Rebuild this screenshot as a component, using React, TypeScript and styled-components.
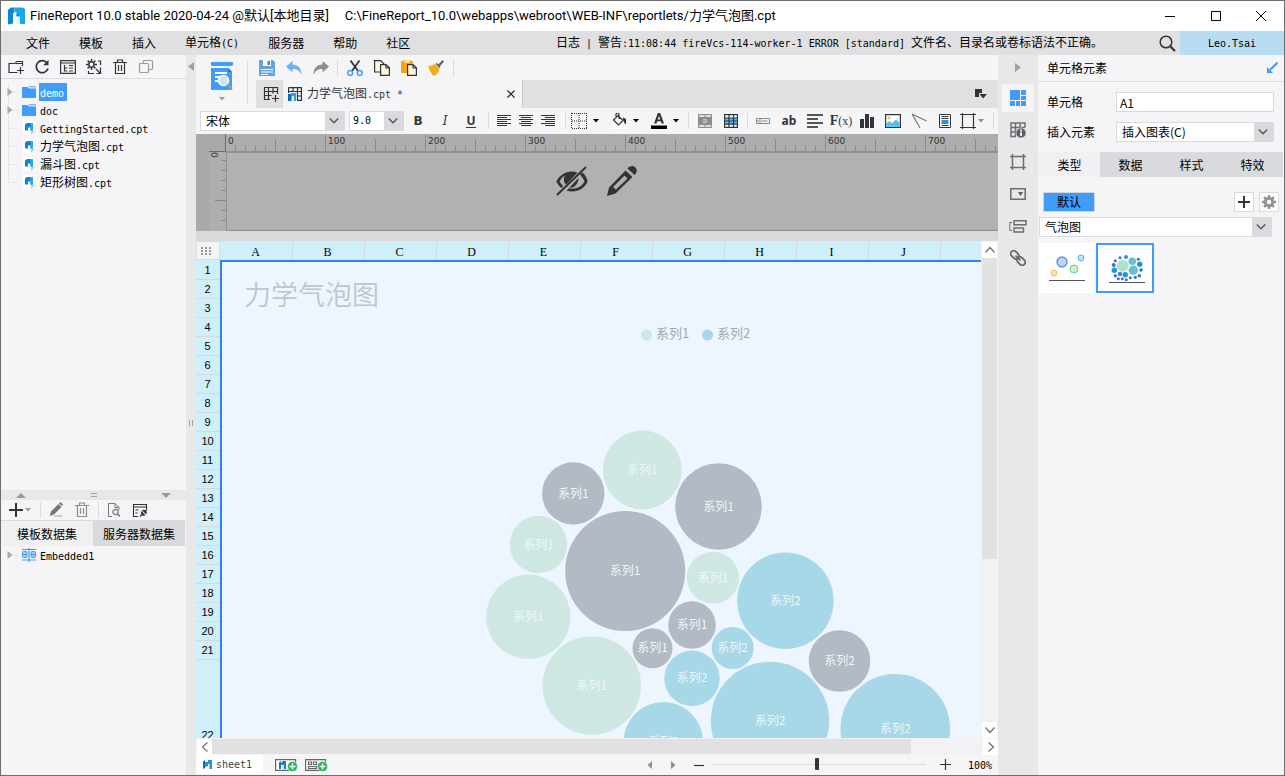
import React, { useEffect, useState } from "react";
import styled, { createGlobalStyle, css } from "styled-components";

const blue = "#419bf9";
const ink = "#333437";
const panel = "#f5f5f7";
const gutter = "#e8e8e8";
const line = "#d9dadd";

const GlobalStyle = createGlobalStyle`
  *, *::before, *::after { box-sizing: border-box; }
  body { margin: 0; }
  body, button, input, select {
    font-family: "Noto Sans CJK SC", "Noto Sans", sans-serif;
    font-size: 12px;
    line-height: 18px;
    color: #000;
  }
  button, input, select { margin: 0; padding: 0; border: 0; background: none; outline: 0; border-radius: 0; }
  ul { list-style: none; margin: 0; padding: 0; }
  svg { display: block; flex: none; }
`;

/* ---------- shared pieces ---------- */

const Latin = styled.span`
  font-family: "DejaVu Sans Mono", "Liberation Mono", monospace;
  font-size: 10px;
  white-space: pre;
`;

const Mixed = ({ children }: { children: string }) => (
  <span>
    {children.split(/([\x20-\x7e]+)/).map((part, i) =>
      i % 2 ? <Latin key={i}>{part}</Latin> : part
    )}
  </span>
);

type IconProps = { w?: number; h?: number; color?: string; children: React.ReactNode };
const Icon = ({ w = 16, h = 16, color = ink, children }: IconProps) => (
  <svg width={w} height={h} viewBox={`0 0 ${w} ${h}`} fill="none" stroke={color} aria-hidden="true">
    {children}
  </svg>
);

const Caret = ({ color = "#000" }: { color?: string }) => (
  <svg width="6" height="4" viewBox="0 0 6 4" aria-hidden="true"><path d="M0 0h6L3 3.5z" fill={color} /></svg>
);

const IconButton = styled.button<{ $w?: number; $h?: number }>`
  display: flex;
  flex: none;
  align-items: center;
  justify-content: center;
  gap: 2px;
  width: ${(p) => p.$w ?? 26}px;
  height: ${(p) => p.$h ?? 22}px;
`;

const DropButton = styled.button<{ $w?: number }>`
  display: flex;
  flex: none;
  align-items: center;
  gap: 6px;
  width: ${(p) => p.$w ?? 40}px;
  height: 22px;
`;

const Sep = styled.span<{ $w?: number; $h?: number }>`
  flex: none;
  width: ${(p) => p.$w ?? 7}px;
  height: ${(p) => p.$h ?? 16}px;
  background: linear-gradient(${line}, ${line}) center / 1px 100% no-repeat;
`;

const Spacer = styled.span`
  flex: 1;
`;

const SelectBox = styled.span<{ $w?: number }>`
  display: grid;
  grid-template-columns: 1fr 20px;
  align-items: center;
  height: 20px;
  flex: ${(p) => (p.$w ? "none" : "1")};
  width: ${(p) => (p.$w ? `${p.$w}px` : "auto")};
  border: 1px solid ${line};
  background: linear-gradient(90deg, #fff calc(100% - 19px), ${line} calc(100% - 19px));
  svg { grid-area: 1 / 2; justify-self: center; pointer-events: none; }
`;

const PickerInput = styled.select<{ $mono?: boolean }>`
  grid-area: 1 / 1 / 2 / 3;
  appearance: none;
  height: 18px;
  padding-left: ${(p) => (p.$mono ? 3 : 5)}px;
  ${(p) => p.$mono && css`font-family: "DejaVu Sans Mono", monospace; font-size: 10px;`}
`;

const Picker = ({ label, value, w, id, mono }: { label: string; value: string; w?: number; id?: string; mono?: boolean }) => (
  <SelectBox $w={w}>
    <PickerInput id={id} aria-label={label} defaultValue={value} $mono={mono}>
      <option>{value}</option>
    </PickerInput>
    <Icon w={10} h={6} color="#555"><path d="M.8.6 5 4.8 9.2.6" strokeWidth="1.4" /></Icon>
  </SelectBox>
);

const Tabs = styled.div`
  display: flex;
  flex: none;
  height: 25px;
`;

const SideTabs = styled(Tabs)`
  padding-right: 1px;
`;

const Tab = styled.button<{ $on?: boolean }>`
  flex: 1 0 0;
  min-width: 0;
  background: ${(p) => (p.$on ? "#f0f0f2" : line)};
`;

/* ---------- logo ---------- */

const Mark = () => (
  <svg width="17" height="18" viewBox="0 0 17 18" aria-hidden="true">
    <path d="M0 3 3 .5h3.500v5L5 7v9.500L0 17.500z" fill="#0b84dc" />
    <path d="M6.500.5H14Q17 .5 17 3v14h-4.500l-1-.5V10H8.500V5L6.500 3z" fill="#18a9ea" />
    <path d="M5.500 6.500 7 5h1.500v4.500H12V17H8.500v-6H6.500v5.500h-1z" fill="#e4f4fd" />
    <path d="M7 1h7.500Q16.500 1 16.500 3v4H8.500V5H7z" fill="#18a9ea" />
    <path d="M8.500 7.500h2V9h-2z" fill="#0766b8" />
  </svg>
);

/* ---------- window frame ---------- */

const Window = styled.div`
  display: flex;
  flex-direction: column;
  height: 100vh;
  border: 1px solid #6d6d70;
  background: ${panel};
  overflow: hidden;
`;

const TitleBar = styled.header`
  display: flex;
  flex: none;
  align-items: center;
  height: 30px;
  padding-left: 7px;
  background: #fff;
  font-family: Roboto, "Noto Sans CJK SC", sans-serif;
  font-size: 13px;
`;

const TitleText = styled.span`
  margin-left: 5px;
  white-space: nowrap;
`;

const PathText = styled.span`
  margin-left: 16px;
  white-space: nowrap;
`;

const MenuBar = styled.div`
  display: flex;
  flex: none;
  align-items: center;
  height: 24px;
  background: #e0e0e2;
`;

const Menu = styled.nav`
  display: flex;
  gap: 29px;
  padding-left: 25px;
`;

const MenuItem = styled.button`
  white-space: nowrap;
`;

const LogLine = styled.span`
  margin-right: 52px;
  white-space: nowrap;
`;

const User = styled.button`
  flex: none;
  width: 104px;
  height: 24px;
  background: #b8dcf2;
`;

const Body = styled.div`
  display: flex;
  flex: 1;
  min-height: 0;
`;

/* ---------- left side ---------- */

const Side = styled.aside`
  display: flex;
  flex: none;
  flex-direction: column;
  width: 185px;
`;

const SideTools = styled.div<{ $h: number }>`
  display: flex;
  flex: none;
  align-items: center;
  height: ${(p) => p.$h}px;
  padding-left: 2px;
  border-bottom: 1px solid ${line};
`;

const Tree = styled.ul`
  flex: 1;
  min-height: 0;
  overflow: hidden;
`;

const FileTree = styled(Tree)`
  padding-top: 4px;
`;

const DatasetTree = styled(Tree)`
  flex: none;
  height: 229px;
`;

const Node = styled.li`
  display: flex;
  align-items: center;
  height: 18px;
  padding-left: 5px;
`;

const NodeIcon = styled.span`
  display: flex;
  justify-content: center;
  width: 18px;
`;

const NodeLabel = styled.span<{ $on?: boolean }>`
  height: 18px;
  padding: 0 3px 0 1px;
  margin-left: 1px;
  white-space: nowrap;
  background: ${(p) => (p.$on ? blue : "none")};
  color: ${(p) => (p.$on ? "#fff" : "#000")};
`;

const SplitBar = styled.div`
  display: flex;
  flex: none;
  align-items: center;
  justify-content: space-between;
  height: 10px;
  padding: 0 15px;
  background: ${gutter};
`;

const SideGrip = styled.div`
  display: flex;
  flex: none;
  flex-direction: column;
  align-items: center;
  width: 10px;
  padding-top: 7px;
  background: ${gutter};
`;

const GripMark = styled.span`
  margin: auto 0;
`;

const Guide = ({ open, last }: { open?: boolean; last?: boolean }) => (
  <Icon w={14} h={18} color="#e6e6e9">
    <path d={last ? "M2.500 0v9.500H12" : "M2.500 0v18M2.500 9.500H12"} />
    {open && <path d="M1.500 5v8l5-4z" fill="#a8a8aa" stroke="none" />}
  </Icon>
);

const Folder = () => (
  <Icon w={14} h={12} color="none">
    <path d="M0 1h5.500L7 2.500h7V12H0z" fill={blue} />
    <path d="M6 0h8v1.500H7.500z" fill="#7fbcfb" />
  </Icon>
);

const FileIcon = () => (
  <Icon w={12} h={14} color="none">
    <path d="M0 0h12v9l-4 5H0z" fill="#fff" />
    <path d="M8 10h4l-4 4z" fill="#c9c9cc" />
    <path d="M2 3.500 4 2h6v7.500H7.500v-3H5V9.500H2z" fill="#1183d8" />
    <path d="M7 2h3v7.500H7.500V4z" fill="#25a9ea" />
  </Icon>
);

const files = ["GettingStarted.cpt", "力学气泡图.cpt", "漏斗图.cpt", "矩形树图.cpt"];

const Trash = ({ color }: { color?: string }) => (
  <Icon color={color}>
    <path d="M1 3.500h14M5.500 3V1h5v2M3.500 4v10.500h9V4M6.500 6v6M9.500 6v6" strokeWidth="1.2" />
  </Icon>
);

const LeftSide = () => (
  <Side>
    <SideTools $h={24}>
      <IconButton aria-label="新建文件夹"><Icon><path d="M9.500 13.500H1v-9h6l1.500-2h6V7M8 4.500h6.500M12.500 8v7M9 11.500h7" strokeWidth="1.2" /></Icon></IconButton>
      <IconButton aria-label="刷新"><Icon><path d="M13 4A6 6 0 1 0 14 9.500" strokeWidth="1.7" /><path d="M14.500.8v5.400H9.200z" fill={ink} stroke="none" /></Icon></IconButton>
      <IconButton aria-label="定位"><Icon><path d="M.6 1.600h14.800v12.800H.6zM1 4h14M4.500 6v6h3M4.500 9h3M9 6.500h4M9 9h4M9 12h4" strokeWidth="1.2" /></Icon></IconButton>
      <IconButton aria-label="设置目录"><Icon><circle cx="5.500" cy="5.500" r="2.700" strokeWidth="1.5" /><path d="M5.500 0v2M5.500 9v2M0 5.500h2M9 5.500h2M1.600 1.600l1.500 1.500M8 8l1.400 1.400M9.400 1.600 8 3.100M1.600 9.400 3.100 8" strokeWidth="1.5" /><path d="M12 2h2.500v4M2.500 12v2.500H8M14.500 8.500v6h-4M10 10l4 4" strokeWidth="1.2" /></Icon></IconButton>
      <IconButton aria-label="删除"><Trash /></IconButton>
      <IconButton aria-label="复制"><Icon color="#9a9a9d"><path d="M5.500 4V2.500a1 1 0 0 1 1-1h7a1 1 0 0 1 1 1v7a1 1 0 0 1-1 1H11M2.500 4.500h7a1 1 0 0 1 1 1v7a1 1 0 0 1-1 1h-7a1 1 0 0 1-1-1v-7a1 1 0 0 1 1-1z" strokeWidth="1.2" /></Icon></IconButton>
    </SideTools>
    <FileTree>
      <Node><Guide open /><NodeIcon><Folder /></NodeIcon><NodeLabel $on><Mixed>demo</Mixed></NodeLabel></Node>
      <Node><Guide open /><NodeIcon><Folder /></NodeIcon><NodeLabel><Mixed>doc</Mixed></NodeLabel></Node>
      {files.map((name, i) => (
        <Node key={name}>
          <Guide last={i === files.length - 1} />
          <NodeIcon><FileIcon /></NodeIcon>
          <NodeLabel><Mixed>{name}</Mixed></NodeLabel>
        </Node>
      ))}
    </FileTree>
    <SplitBar>
      <Icon w={10} h={5} color="none"><path d="M0 5 5 0l5 5z" fill="#9b9b9e" /></Icon>
      <Icon w={6} h={4} color="#a4a4a6"><path d="M0 .5h6M0 3.500h6" /></Icon>
      <Icon w={10} h={5} color="none"><path d="M0 0h10L5 5z" fill="#9b9b9e" /></Icon>
    </SplitBar>
    <SideTools $h={21}>
      <IconButton $w={34} $h={20} aria-label="新增数据集"><Icon w={14} h={14}><path d="M7 0v14M0 7h14" strokeWidth="2" /></Icon><Caret color="#9b9b9e" /></IconButton>
      <Sep $w={6} />
      <IconButton $h={20} aria-label="编辑"><Icon color="none"><path d="m1.500 14 1.500-4.500L10.500 2l3 3L6 12.500z" fill="#77777a" /><path d="M11 1.500 12.500 0 15 2.500 14 4z" fill="#77777a" /><path d="M6 14h8" stroke="#b0b0b3" strokeWidth="1.2" /></Icon></IconButton>
      <IconButton $h={20} aria-label="删除数据集"><Trash color="#8d8d90" /></IconButton>
      <Sep $w={6} />
      <IconButton $h={20} aria-label="预览"><Icon color="#77777a"><path d="M6 14.500H2.500V1.500H9l4 4V8M9 1.500v4h4" /><circle cx="9.500" cy="10" r="2.700" strokeWidth="1.2" /><path d="m11.500 12 2.500 2.500" strokeWidth="1.5" /></Icon></IconButton>
      <IconButton $h={20} aria-label="连接"><Icon><path d="M6 14.500H1.500v-12h13V7M1.500 5h13M3.500 8h3M3.500 11h2" strokeWidth="1.1" /><path d="M8 14.500l2-2M13 9.500l2-2M9.500 10l3 3c-1.500 1-3.500-1-3-3zM11 8.500l3 3c1-1.500-1-3.500-3-3z" strokeWidth="1.1" /></Icon></IconButton>
    </SideTools>
    <SideTabs role="tablist">
      <Tab role="tab" aria-selected $on>模板数据集</Tab>
      <Tab role="tab">服务器数据集</Tab>
    </SideTabs>
    <DatasetTree>
      <Node>
        <Icon w={14} h={18} color="#e6e6e9"><path d="M6 9.500h6" /><path d="M1.500 5v8l5-4z" fill="#a8a8aa" stroke="none" /></Icon>
        <NodeIcon>
          <Icon w={14} h={14} color={blue}>
            <path d="M7 0v14M0 1.500h14M0 12h14" strokeWidth="1.2" />
            <rect x=".5" y="3.500" width="4.500" height="6" rx="1" fill="#9accfb" />
            <rect x="9" y="3.500" width="4.500" height="6" rx="1" fill="#9accfb" />
            <path d="M1 6.500h4M9 6.500h4" />
          </Icon>
        </NodeIcon>
        <NodeLabel><Mixed>Embedded1</Mixed></NodeLabel>
      </Node>
    </DatasetTree>
  </Side>
);

/* ---------- centre: toolbars ---------- */

const Main = styled.main`
  display: flex;
  flex: 1;
  flex-direction: column;
  min-width: 0;
`;

const Top = styled.div`
  display: flex;
  flex: none;
  height: 53px;
`;

const PreviewCell = styled.div`
  display: flex;
  flex: none;
  align-items: center;
  width: 60px;
`;

const PreviewButton = styled.button`
  display: flex;
  flex-direction: column;
  align-items: center;
  gap: 7px;
  width: 51px;
`;

const TopStack = styled.div`
  display: flex;
  flex: 1;
  flex-direction: column;
  min-width: 0;
`;

const QuickBar = styled.div`
  display: flex;
  align-items: center;
  height: 25px;
  margin-left: -3px;
`;

const FileTabs = styled.div`
  display: flex;
  align-items: center;
  height: 28px;
  background: #e0e0e2;
  padding-right: 9px;
`;

const NewTab = styled(IconButton)`
  border-right: 1px solid ${line};
  padding-left: 4px;
`;

const FileTab = styled.div`
  display: flex;
  align-items: center;
  justify-content: space-between;
  width: 240px;
  height: 28px;
  padding: 0 4px 0 5px;
  border-right: 1px solid #c9c9cc;
  background: ${panel};
`;

const FileName = styled.span`
  display: flex;
  align-items: center;
  gap: 5px;
  color: ${ink};
`;

const FormatBar = styled.div`
  display: flex;
  flex: none;
  align-items: center;
  height: 26px;
  padding-left: 4px;
`;

const SizeCell = styled.span`
  display: flex;
  margin-left: 4px;
`;

const Letter = styled.span<{ $kind: "b" | "i" | "u" | "ab" | "fx" }>`
  font-family: "DejaVu Sans", sans-serif;
  font-size: 12px;
  font-weight: bold;
  line-height: 14px;
  color: ${ink};
  ${(p) => p.$kind === "i" && css`font-family: "DejaVu Serif", serif; font-style: italic; font-weight: normal;`}
  ${(p) => p.$kind === "u" && css`border-bottom: 1px solid ${ink}; font-family: "Noto Sans", sans-serif; line-height: 12px;`}
  ${(p) => p.$kind === "ab" && css`font-family: "Noto Sans", sans-serif;`}
  ${(p) => p.$kind === "fx" && css`font-family: "Liberation Serif", serif; font-size: 14px;`}
`;

const Argument = styled.span`
  font-size: 12px;
  font-weight: normal;
`;

const GridIcon = () => (
  <Icon><path d="M7 13.500H1.500v-12h13V8M1.500 5.500h13M1.500 9.500h7M5.500 1.500v12M10 1.500v6M12.500 9v7M9 12.500h7" strokeWidth="1.2" /></Icon>
);

const Lines = ({ d }: { d: string }) => <Icon w={14} h={12}><path d={d} /></Icon>;

const QuickTools = () => (
  <QuickBar>
    <IconButton $w={27} aria-label="保存"><Icon color="none"><path d="M0 0h14l2 2v14H0z" fill="#69a2dd" /><path d="M4 0h8v6H4z" fill="#fff" /><path d="M8.500 1H11v4H8.500z" fill="#3f86cf" /><path d="M2 9.500h12M2 12h12M2 14.500h7" stroke="#fff" /></Icon></IconButton>
    <IconButton $w={27} aria-label="撤销"><Icon color="none"><path d="M0 6.500 6.500 1v3.500C12 4.500 15.500 8 15.500 15 13.500 10.500 11 9 6.500 9v3.500z" fill="#6fb0f2" /></Icon></IconButton>
    <IconButton $w={27} aria-label="重做"><Icon color="none"><path d="M16 6.500 9.500 1v3.500C4 4.500.5 8 .5 15 2.500 10.500 5 9 9.500 9v3.500z" fill="#8e8e92" /></Icon></IconButton>
    <Sep />
    <IconButton $w={27} aria-label="剪切"><Icon><path d="M3.500.5 11 11M12.500.5 5 11" strokeWidth="1.8" /><circle cx="3.200" cy="13" r="2.400" stroke={blue} strokeWidth="1.5" /><circle cx="12.800" cy="13" r="2.400" stroke={blue} strokeWidth="1.5" /></Icon></IconButton>
    <IconButton $w={27} aria-label="复制单元格"><Icon><path d="M.6.6h6L10 4v8H.6z" fill="#fff6dc" strokeWidth="1.2" /><path d="M6.600 4.600h5.400l3.400 3.200v7.600H6.600zM12 4.600v3.400h3.400" fill="#fff6dc" strokeWidth="1.2" /></Icon></IconButton>
    <IconButton $w={27} aria-label="粘贴"><Icon><path d="M0 1h12v12H0z" fill="#f2a814" stroke="none" /><path d="M3 0h6v3H3z" fill="#fff" stroke="#f2a814" /><path d="M6.600 4.600h5.400l3.400 3.200v7.600H6.600zM12 4.600v3.400h3.400" fill="#fff6dc" strokeWidth="1.2" /></Icon></IconButton>
    <IconButton $w={27} aria-label="格式刷"><Icon color="none"><path d="M0 5.500c3 .8 4.500-.2 6.500-1.500l5 5c-.5 3-3 6-6 7C3 13.500 1 9.500 0 5.500z" fill="#f4ab1b" /><path d="m7.500 4 4 4 1-1.200L9 3zM10.500 4.500 14.500 0 16 1.500 12 6z" fill="#5c5c60" /></Icon></IconButton>
    <Sep $w={9} />
  </QuickBar>
);

const TopArea = () => (
  <Top>
    <PreviewCell>
      <PreviewButton aria-label="预览模板">
        <Icon w={22} h={28} color="none">
          <path d="M0 0h22v3l-1 1H1L0 3zM0 6h17l4 4v18H0z" fill={blue} />
          <path d="M17 6v4h4z" fill="#1b6fd0" />
          <path d="M4 11h12M4 15h5M4 19h4" stroke="#fff" strokeWidth="2" />
          <circle cx="12.500" cy="18.500" r="5" fill="#cfe1f4" stroke="#fff" strokeWidth="1.5" />
          <path d="m16.200 22.200 4.800 4.800" stroke="#8ba0b8" strokeWidth="2.5" />
        </Icon>
        <Caret color="#9b9b9e" />
      </PreviewButton>
      <Sep $w={1} $h={42} />
    </PreviewCell>
    <TopStack>
      <QuickTools />
      <FileTabs>
        <NewTab $w={27} $h={28} aria-label="新建报表"><GridIcon /></NewTab>
        <FileTab>
          <FileName>
            <Icon w={14} h={14}>
              <path d="M.6.600h12.800v12.800H9M.6 4.500h13M5 .6v4M9.500.6v13M.6.6V6M9.500 9h4" strokeWidth="1.2" />
              <path d="M0 7h3.500v7H0z" fill="#0a6cc0" stroke="none" /><path d="M3 6h5v8H6V9H3z" fill="#22a5e8" stroke="none" />
            </Icon>
            <Mixed>力学气泡图.cpt *</Mixed>
          </FileName>
          <IconButton $w={14} aria-label="关闭标签"><Icon w={8} h={8}><path d="m.5.5 7 7m0-7-7 7" strokeWidth="1.3" /></Icon></IconButton>
        </FileTab>
        <Spacer />
        <IconButton $w={16} aria-label="标签列表"><Icon w={12} h={10} color="none"><path d="M0 0h7v4H4v4H0z" fill={ink} /><path d="M4.500 5H12L8.200 9.500z" fill={ink} /></Icon></IconButton>
      </FileTabs>
    </TopStack>
  </Top>
);

const Format = () => (
  <FormatBar>
    <Picker label="字体" value="宋体" w={145} />
    <SizeCell><Picker label="字号" value="9.0" w={55} mono /></SizeCell>
    <IconButton $w={28} aria-label="加粗"><Letter $kind="b">B</Letter></IconButton>
    <IconButton aria-label="斜体"><Letter $kind="i">I</Letter></IconButton>
    <IconButton aria-label="下划线"><Letter $kind="u">U</Letter></IconButton>
    <Sep $w={9} />
    <IconButton $w={22} aria-label="左对齐"><Lines d="M0 .5h14M0 2.500h10M0 4.500h14M0 6.500h10M0 8.500h14M0 10.500h10" /></IconButton>
    <IconButton $w={22} aria-label="居中"><Lines d="M0 .5h14M2 2.500h10M0 4.500h14M2 6.500h10M0 8.500h14M2 10.500h10" /></IconButton>
    <IconButton $w={22} aria-label="右对齐"><Lines d="M0 .5h14M4 2.500h10M0 4.500h14M4 6.500h10M0 8.500h14M4 10.500h10" /></IconButton>
    <Sep $w={12} />
    <DropButton aria-label="边框"><Icon><path d="M1 .5h15M1 15.500h15M1 8h15M.5 0v16M15.500 0v16M8 0v16" strokeDasharray="1 1" /></Icon><Caret /></DropButton>
    <DropButton aria-label="背景色"><Icon><path d="M0 12h16v4H0z" fill="#fff" stroke="none" /><path d="M2.500 7 7 2.500l5 5L7.500 12zM5 5V1.500a1.500 1.500 0 0 1 3 0V6" strokeWidth="1.2" /><path d="M12 4.500 15 6v5c-2 0-1.500-2.500-3-4z" fill={ink} stroke="none" /></Icon><Caret /></DropButton>
    <DropButton $w={34} aria-label="字体颜色"><Icon color="none"><path d="M0 12.500h16V16H0z" fill="#000" /><path d="M3 10.500 6.800 0h2.400L13 10.500h-2.500L9.800 8.300H6.200l-.7 2.200zM6.800 6.500h2.400L8 2.800z" fill={ink} /></Icon><Caret /></DropButton>
    <Sep />
    <IconButton aria-label="合并单元格"><Icon w={14} h={14} color="#8c8c8f"><path d="M.5.5h13v13H.5zM7 0v3M7 11v3" fill="#dcdcdf" /><path d="M0 3h14v8H0z" fill="#8c8c8f" stroke="none" /><path d="M5 5.500h3.500v3H5.500V7h3" stroke="#c4c4c6" /></Icon></IconButton>
    <IconButton aria-label="取消合并"><Icon w={14} h={14}><path d="M.6.600h12.800v12.800H.6z" fill="#fff" strokeWidth="1.2" /><path d="M1 4h12v6.200H1z" fill="#4fc3f7" stroke="none" /><path d="M0 4h14M0 7h14M0 10.200h14M5 0v14M9.500 0v14" strokeWidth="1.2" /></Icon></IconButton>
    <Sep $w={6} />
    <IconButton aria-label="插入控件"><Icon w={14} h={6} color="#88888b"><path d="M.5.5h13v5H.5zM4 .5v5M5.500 3h6M2 2v2" /></Icon></IconButton>
    <IconButton aria-label="插入文本"><Letter $kind="ab">ab</Letter></IconButton>
    <IconButton aria-label="富文本"><Icon h={14} color="#555558"><path d="M0 1h16M0 5h11M0 9h16M0 13h11" strokeWidth="2" /></Icon></IconButton>
    <IconButton aria-label="公式"><Letter $kind="fx">F<Argument>(x)</Argument></Letter></IconButton>
    <IconButton aria-label="图表"><Icon w={14} h={14} color="none"><path d="M0 5h4v9H0zM5 0h4v14H5zM10 3h4v11h-4z" fill={ink} /></Icon></IconButton>
    <IconButton aria-label="图片"><Icon h={14}><path d="M.6.600h14.800v12.800H.6z" fill="#fff" strokeWidth="1.2" /><path d="M1.200 12.800V9.500L4 7l3 2 4-3.500 3.800 3.300v4z" fill="#4fc3f7" stroke="none" /><circle cx="4" cy="4" r="1.600" fill="#f9c23c" stroke="none" /></Icon></IconButton>
    <IconButton aria-label="斜线"><Icon color="#77777a"><path d="M1 1l14.500 7M1 1l8 14" strokeWidth="1.2" /></Icon></IconButton>
    <IconButton aria-label="子报表"><Icon w={12} h={14}><path d="M.5.5h11v13H.5z" fill="#fff" /><path d="M2.500 2.500h7M2.500 4.500h7M2.500 11.500h7" /><path d="M2.500 6h7v4h-7z" fill="#2f8fdc" stroke="none" /></Icon></IconButton>
    <IconButton $w={28} aria-label="悬浮元素"><Icon><path d="M2.500 0v16M13.500 0v16M0 1.500h16M0 14.500h16" strokeWidth="1.2" /></Icon><Caret color="#8e8e92" /></IconButton>
    <Spacer />
    <Sep $w={9} />
  </FormatBar>
);

/* ---------- centre: parameter pane with rulers ---------- */

const ParamPane = styled.section`
  display: grid;
  flex: none;
  grid-template: 17px 80px / 30px 1fr;
  overflow: hidden;
  background: #b1b1b1;
`;

const RulerCorner = styled.div`
  background: #a9a9a9;
  border-right: 1px solid #6b6b6b;
`;

const RulerTop = styled.div`
  min-width: 0;
  overflow: hidden;
  background: #adadad;
`;

const RulerLeft = styled.div`
  background: linear-gradient(90deg, #a9a9a9 13px, #aeaeae 13px);
`;

const ParamCanvas = styled.div`
  display: flex;
  justify-content: center;
  gap: 18px;
  padding: 13px 31px 0 0;
  border: solid #909090;
  border-width: 2px 0 1px 1px;
`;

/* Width left for the ruler once the side panels are taken off the window. */
const rulerWidth = () => Math.max(0, window.innerWidth - 513);

const useRulerWidth = () => {
  const [width, setWidth] = useState(rulerWidth);
  useEffect(() => {
    const update = () => setWidth(rulerWidth());
    window.addEventListener("resize", update);
    return () => window.removeEventListener("resize", update);
  }, []);
  return width;
};

const Rulers = () => {
  const width = useRulerWidth();
  const ticks = Array.from({ length: Math.floor(width / 10) }, (_, i) => i + 1);
  const labels = Array.from({ length: Math.floor((width - 20) / 100) + 1 }, (_, i) => i * 100);
  return (
    <>
      <RulerCorner />
      <RulerTop>
        <svg width={width} height="17" fontFamily="DejaVu Sans, sans-serif" fontSize="9" fill="#333">
          <path d={ticks.map((n) => `M${n * 10 - 0.5} ${n % 10 === 0 ? 1 : n % 5 === 0 ? 5 : 12}V17`).join("")} stroke="#8a8a8a" />
          {labels.map((n) => <text key={n} x={n + 2} y="10">{n}</text>)}
        </svg>
      </RulerTop>
      <RulerLeft>
        <svg width="30" height="80" viewBox="0 0 30 80" fontFamily="DejaVu Sans, sans-serif" fontSize="9" fill="#333">
          <path d="M25 9.500h5M25 19.500h5M25 29.500h5M25 39.500h5M19 49.500h11M25 59.500h5M25 69.500h5" stroke="#8a8a8a" />
          <path d="M13 .5h17" stroke="#6b6b6b" />
          <text transform="translate(15 1) rotate(90)" x="0" y="0">0</text>
        </svg>
      </RulerLeft>
    </>
  );
};

const Strip = styled.div`
  flex: none;
  height: 10px;
  background: #d9d9dc;
`;

/* ---------- centre: sheet ---------- */

const SheetArea = styled.div`
  display: flex;
  flex: 1;
  min-height: 0;
`;

const Sheet = styled.div`
  display: grid;
  flex: 1;
  grid-template: 19px 1fr / 24px 1fr;
  min-width: 0;
  min-height: 0;
  overflow: hidden;
`;

const Corner = styled.button`
  display: flex;
  align-items: center;
  padding-left: 4px;
  border: 1px solid ${line};
  background: ${panel};
`;

const Columns = styled.div`
  display: flex;
  overflow: hidden;
  background: #cff0fb;
`;

const Column = styled.div`
  flex: none;
  width: 72px;
  padding: 2px 2px 0 0;
  border-left: 1px solid #d5dade;
  text-align: center;
  font-family: "Liberation Serif", serif;
  &:first-child { border-left-color: transparent; }
`;

const Rows = styled.div`
  padding-top: 1px;
  overflow: hidden;
  background: #cff0fb;
`;

const Row = styled.div<{ $tall?: boolean }>`
  display: flex;
  align-items: center;
  justify-content: center;
  height: ${(p) => (p.$tall ? 151 : 19)}px;
  padding-right: 1px;
  border-bottom: 1px solid #d5dade;
  font-size: 11px;
  font-family: "Liberation Sans", sans-serif;
`;

const ChartCell = styled.div`
  overflow: hidden;
  border: solid #2f80f0;
  border-width: 2px 0 0 2px;
  background: #edf5fe;
`;

type Bubble = [number, number, number, "g" | "n" | "b", number];
const bubbles: Bubble[] = [
  [420.3, 208, 39.4, "g", 1],
  [351.3, 231.5, 31.2, "n", 1],
  [496.5, 244.5, 43.3, "n", 1],
  [316.5, 282.5, 28.7, "g", 1],
  [403.2, 309, 60, "n", 1],
  [491, 315.7, 26, "g", 1],
  [306.3, 354.8, 42.2, "g", 1],
  [563.4, 338.7, 48.2, "b", 2],
  [470, 363, 23.8, "n", 1],
  [430.5, 386.3, 20, "n", 1],
  [510.7, 386, 21, "b", 2],
  [470, 416.3, 27.7, "b", 2],
  [369.8, 423.5, 49.3, "g", 1],
  [617.5, 399, 30.8, "n", 2],
  [548, 459, 59.2, "b", 2],
  [673.3, 466.8, 54.8, "b", 2],
  [441.3, 479.7, 39.7, "b", 2],
];
const fills = { g: "#cfe7e3", n: "#b3bac3", b: "#a6d8e7" };

const Chart = () => (
  <svg width="760" height="600" viewBox="0 0 760 600" fontFamily="Noto Sans CJK SC, sans-serif" role="img" aria-label="力学气泡图">
    <text x="22" y="43" fontSize="27" fontWeight="350" fill="#bfc5cd">力学气泡图</text>
    <circle cx="424.5" cy="73" r="5.5" fill={fills.g} />
    <text x="434" y="76" fontSize="13" fill="#a3a9b1">系列1</text>
    <circle cx="485.5" cy="73" r="5.5" fill={fills.b} />
    <text x="495" y="76" fontSize="13" fill="#a3a9b1">系列2</text>
    {bubbles.map(([x, y, r, kind, n]) => (
      <g key={`${x}-${y}`}>
        <circle cx={x} cy={y} r={r} fill={fills[kind]} />
        <text x={x} y={y + 4} fontSize="12" textAnchor="middle" fill="#eef5fc">{`系列${n}`}</text>
      </g>
    ))}
  </svg>
);

const VScroll = styled.div`
  display: flex;
  flex: none;
  flex-direction: column;
  width: 17px;
  padding: 1px 1px 0;
  background: #f2f2f4;
`;

const HScroll = styled.div`
  display: flex;
  flex: none;
  height: 16px;
  padding: 1px 0 0 1px;
  background: #f2f2f4;
`;

const ScrollButton = styled.button`
  display: flex;
  flex: none;
  align-items: center;
  justify-content: center;
  width: 15px;
  height: 16px;
  background: #fff;
`;

const Thumb = styled.span<{ $share: number }>`
  flex: ${(p) => p.$share};
  background: #e1e1e1;
`;

const Track = styled.span<{ $share: number }>`
  flex: ${(p) => p.$share};
`;

const Chevron = ({ d }: { d: string }) => <Icon w={12} h={12} color="#707073"><path d={d} strokeWidth="1.2" /></Icon>;

/* ---------- centre: sheet bar ---------- */

const StatusBar = styled.footer`
  display: flex;
  flex: none;
  align-items: center;
  height: 21px;
  padding-right: 6px;
`;

const SheetTab = styled.button`
  display: flex;
  align-items: center;
  gap: 4px;
  width: 67px;
  height: 19px;
  padding-left: 7px;
  background: #fff;
  color: #444;
`;

const AddButtons = styled.span`
  display: flex;
  margin-left: 9px;
`;

const Zoom = styled.input`
  flex: none;
  width: 214px;
  height: 20px;
  margin-right: 7px;
  appearance: none;
  &::-webkit-slider-runnable-track { height: 1px; background: ${line}; }
  &::-webkit-slider-thumb {
    appearance: none;
    width: 4px;
    height: 12px;
    margin-top: -6px;
    border-radius: 1px;
    background: ${ink};
  }
`;

const ZoomValue = styled.span`
  margin-left: 9px;
`;

const Center = () => (
  <Main>
    <TopArea />
    <Format />
    <ParamPane>
      <Rulers />
      <ParamCanvas>
        <IconButton $w={32} $h={30} aria-label="隐藏参数面板">
          <Icon w={32} h={30} color="none">
            <path d="M16 5.500C8.500 5.500 3 10 .3 15.500 1.500 18 3.200 20.200 5.200 22l2-2C5.800 18.800 4.600 17.300 3.500 15.500 5 12.500 7 10.500 9 9.500c-2 3.500-1.500 6.500 1 9.300L21.500 6.600C19.700 5.900 18 5.500 16 5.500z" fill="#333" />
            <path d="m22.500 12-9 9.500C18 22.500 22.500 18 22.500 12zM24 8.500 26.500 6.500C29 8.500 30.700 11.500 31.700 15.500 29 21.500 23.500 25.500 16 25.500c-2 0-3.800-.3-5.400-.8l2.300-2.400C19 23.500 25 21.500 28.500 15.500 27.500 13 26 10.700 24 8.500z" fill="#333" />
            <path d="M1 29 30 1" stroke="#333" strokeWidth="2" />
          </Icon>
        </IconButton>
        <IconButton $w={32} $h={30} aria-label="编辑参数面板">
          <Icon w={32} h={30} color="none">
            <path fillRule="evenodd" d="M19.500 4.500 26.500 11 9.500 27.500 1 30l2-8.500zM18.500 9.500 7 21 10 23.500 21.500 12.500z" fill="#333" />
            <path d="M21.500 2.500C24.500-.5 27-.5 29.500 1.500c2 2.500 1.500 5-1 7.500z" fill="#333" />
          </Icon>
        </IconButton>
      </ParamCanvas>
    </ParamPane>
    <Strip />
    <SheetArea>
      <Sheet>
        <Corner aria-label="全选">
          <Icon w={10} h={8} color="#97979a"><path d="M0 1h2m2 0h2m2 0h2M0 4h2m2 0h2m2 0h2M0 7h2m2 0h2m2 0h2" strokeWidth="2" /></Icon>
        </Corner>
        <Columns>{[..."ABCDEFGHIJ", ""].map((c) => <Column key={c}>{c}</Column>)}</Columns>
        <Rows>{Array.from({ length: 22 }, (_, i) => <Row key={i} $tall={i === 21}>{i + 1}</Row>)}</Rows>
        <ChartCell><Chart /></ChartCell>
      </Sheet>
      <VScroll>
        <ScrollButton aria-label="向上"><Chevron d="m1.500 8.500 4.500-5 4.500 5" /></ScrollButton>
        <Thumb $share={302} /><Track $share={163} />
        <ScrollButton aria-label="向下"><Chevron d="m1.500 3.500 4.500 5 4.500-5" /></ScrollButton>
      </VScroll>
    </SheetArea>
    <HScroll>
      <ScrollButton aria-label="向左"><Chevron d="m8.500 1.500-5 4.500 5 4.500" /></ScrollButton>
      <Thumb $share={699} /><Track $share={72} />
      <ScrollButton aria-label="向右"><Chevron d="m3.500 1.500 5 4.500-5 4.500" /></ScrollButton>
    </HScroll>
    <StatusBar>
      <SheetTab>
        <Icon w={9} h={9} color="none"><path d="M0 1.500 2 0v8L0 9z" fill="#0a6cc0" /><path d="M2 2h3v4L2 7zM5 0h4v9H6.500V4H5z" fill="#1c94de" /></Icon>
        <Latin>sheet1</Latin>
      </SheetTab>
      <AddButtons>
        <IconButton $w={30} aria-label="新增报表块"><Icon w={24} h={14}><path d="M.6 1.600h20v10.800H.6z" fill="#fff" strokeWidth="1.2" stroke="#666" /><path d="M4 4.500 6 3v8H4zM8 3h3v8H9V7H6V5z" fill="#1180d5" stroke="none" /><circle cx="17.500" cy="8.500" r="5" fill="#22b455" stroke="#fff" strokeWidth=".6" /><path d="M17.500 5.500v6M14.500 8.500h6" stroke="#fff" strokeWidth="1.5" /></Icon></IconButton>
        <IconButton $w={30} aria-label="新增决策块"><Icon w={24} h={14}><path d="M.6 1.600h20v10.800H.6zM3.500 4h3v2.500h-3zM8.500 4h3v2.500h-3zM3.500 8.500h8v2h-8z" strokeWidth="1.1" stroke="#666" /><circle cx="17.500" cy="8.500" r="5" fill="#22b455" stroke="#fff" strokeWidth=".6" /><path d="M17.500 5.500v6M14.500 8.500h6" stroke="#fff" strokeWidth="1.5" /></Icon></IconButton>
      </AddButtons>
      <Spacer />
      <IconButton $w={24} $h={20} aria-label="上一个"><Icon w={5} h={8} color="none"><path d="M5 0v8L.5 4z" fill="#8f8f92" /></Icon></IconButton>
      <IconButton $w={24} $h={20} aria-label="下一个"><Icon w={5} h={8} color="none"><path d="M0 0v8l4.500-4z" fill="#8f8f92" /></Icon></IconButton>
      <IconButton $h={20} aria-label="缩小"><Icon w={10} h={10}><path d="M0 5.500h10" strokeWidth="1.2" /></Icon></IconButton>
      <Zoom type="range" aria-label="缩放" min={0} max={100} defaultValue={49} />
      <IconButton $h={20} aria-label="放大"><Icon w={11} h={11}><path d="M0 5.500h11M5.500 0v11" strokeWidth="1.2" /></Icon></IconButton>
      <ZoomValue><Latin>100%</Latin></ZoomValue>
    </StatusBar>
  </Main>
);

/* ---------- right side ---------- */

const Rail = styled.nav`
  display: flex;
  flex: none;
  flex-direction: column;
  align-items: center;
  gap: 4px;
  width: 40px;
  background: ${gutter};
`;

const RailButton = styled.button<{ $on?: boolean }>`
  display: flex;
  align-items: center;
  justify-content: center;
  width: 32px;
  height: 28px;
  background: ${(p) => (p.$on ? panel : "none")};
`;

const RailTop = styled(RailButton)`
  height: 25px;
`;

const Props = styled.aside`
  flex: none;
  width: 246px;
`;

const PropsHead = styled.div`
  display: flex;
  align-items: center;
  justify-content: space-between;
  height: 27px;
  padding: 0 6px 0 9px;
  border-bottom: 1px solid ${line};
`;

const Fields = styled.div`
  display: grid;
  gap: 10px;
  padding: 10px 10px 10px 9px;
`;

const Field = styled.div`
  display: flex;
  align-items: center;
  height: 20px;
`;

const FieldLabel = styled.label`
  flex: none;
  width: 69px;
`;

const TextInput = styled.input`
  flex: 1;
  min-width: 0;
  height: 20px;
  padding: 0 3px;
  border: 1px solid ${line};
  background: #fff;
`;

const PropTabs = styled(Tabs)`
  margin: 0 1px;
`;

const Actions = styled.div`
  display: flex;
  align-items: center;
  gap: 5px;
  height: 20px;
  margin: 15px 5px 5px;
`;

const DefaultButton = styled.button`
  width: 52px;
  height: 20px;
  border: 1px solid #cfd6de;
  background: ${blue};
`;

const SquareButton = styled(IconButton)`
  border: 1px solid ${line};
  background: #fff;
`;

const ChartPicker = styled.div`
  display: flex;
  margin: 0 12px 6px 1px;
`;

const Cards = styled.div`
  display: flex;
  gap: 2px;
  padding-left: 1px;
`;

const Card = styled.button<{ $on?: boolean }>`
  display: flex;
  align-items: center;
  justify-content: center;
  width: ${(p) => (p.$on ? 58 : 55)}px;
  height: 50px;
  border: ${(p) => (p.$on ? `2px solid ${blue}` : "0")};
  background: #fff;
`;

const dots: [number, number, number, string][] = [
  [17.7, 12.7, 6, "#aee2c9"], [27.3, 8.3, 3.8, "#67c0cd"], [28.3, 17.3, 4.7, "#67c0cd"],
  [21, 4, 2, "#3d86d8"], [33.3, 6.3, 1.5, "#3d6fc4"], [15, 4.7, 1.5, "#3d6fc4"], [10.3, 7.7, 1.5, "#3d6fc4"],
  [8.7, 12, 2, "#3d6fc4"], [9.3, 17.3, 2.7, "#1f95de"], [10.3, 22.7, 1.7, "#3d6fc4"], [15, 21, 2.2, "#3d86d8"],
  [20.3, 21.7, 2.7, "#1f95de"], [13.3, 25.7, 1.5, "#3d6fc4"], [17.3, 25.7, 1.5, "#3d6fc4"], [21.3, 26.7, 1.5, "#3d6fc4"],
  [25.3, 24.7, 1.5, "#3d6fc4"], [30.3, 24.3, 1.6, "#3d6fc4"], [34.3, 22.7, 1.8, "#3d6fc4"], [34.7, 11.3, 2.7, "#1f95de"],
  [36, 17, 1.8, "#3d6fc4"],
];

const Right = () => (
  <>
    <Rail>
      <RailTop aria-label="收起"><Icon w={6} h={9} color="none"><path d="M0 0v9l6-4.500z" fill="#a0a0a2" /></Icon></RailTop>
      <RailButton $on aria-label="单元格元素"><Icon color="none"><path d="M0 0h10v10H0zM11 0h5v5h-5zM11 6h5v4h-5zM0 11h5v5H0zM6 11h4v5H6zM11 11h5v5h-5z" fill={blue} /></Icon></RailButton>
      <RailButton aria-label="单元格属性"><Icon color="#6a6d73"><path d="M6 14.500H1V1h14v4.500M1 5.500h14M1 10h5M5.500 1v13.500M10 1v4.500" strokeWidth="1.5" /><circle cx="11" cy="11" r="5" fill="#5b5e64" stroke={gutter} strokeWidth=".6" /><path d="M11 7.500v2M11 10.300V14" stroke="#fff" strokeWidth="1.7" /></Icon></RailButton>
      <RailButton aria-label="悬浮元素设置"><Icon color="#6a6d73"><path d="M2.500 0v16M13.500 0v16M0 2.500h16M0 13.500h16" strokeWidth="1.5" /></Icon></RailButton>
      <RailButton aria-label="控件设置"><Icon h={12} color="#6a6d73"><path d="M.8.800h14.400v10.400H.8z" strokeWidth="1.5" /><path d="M8 4h5l-2.500 4z" fill="#5b5e64" stroke="none" /></Icon></RailButton>
      <RailButton aria-label="条件属性"><Icon w={18} h={13} color="#6a6d73"><path d="M3 2.500H.8v8H3" /><path d="M5 .8h12v4H5zM5 8h9.500v4H5z" strokeWidth="1.5" /></Icon></RailButton>
      <RailButton aria-label="超级链接"><Icon color="#6a6d73"><g transform="rotate(45 8 8)" strokeWidth="1.8"><rect x="-1" y="5" width="9" height="6" rx="3" /><rect x="8" y="5" width="9" height="6" rx="3" /><path d="M4.500 8h7" /></g></Icon></RailButton>
    </Rail>
    <Props>
      <PropsHead>
        单元格元素
        <IconButton $w={12} aria-label="弹出"><Icon w={12} h={12} color={blue}><path d="M11.500.5 4 8" strokeWidth="2" /><path d="M1 5v6h6z" fill={blue} stroke="none" /></Icon></IconButton>
      </PropsHead>
      <Fields>
        <Field><FieldLabel htmlFor="cell">单元格</FieldLabel><TextInput id="cell" defaultValue="A1" /></Field>
        <Field><FieldLabel htmlFor="insert">插入元素</FieldLabel><Picker id="insert" label="插入元素" value="插入图表(C)" /></Field>
      </Fields>
      <PropTabs role="tablist">
        <Tab role="tab" aria-selected $on>类型</Tab>
        <Tab role="tab">数据</Tab>
        <Tab role="tab">样式</Tab>
        <Tab role="tab">特效</Tab>
      </PropTabs>
      <Actions>
        <DefaultButton>默认</DefaultButton>
        <Spacer />
        <SquareButton $w={20} $h={20} aria-label="添加"><Icon w={12} h={12}><path d="M6 0v12M0 6h12" strokeWidth="2" /></Icon></SquareButton>
        <SquareButton $w={20} $h={20} aria-label="设置"><Icon w={14} h={14} color="#939396"><circle cx="7" cy="7" r="3.700" strokeWidth="3" /><path d="M7 0v2.500M7 11.500V14M0 7h2.500M11.500 7H14M2 2l1.800 1.800M10.200 10.200 12 12M12 2l-1.800 1.800M3.800 10.200 2 12" strokeWidth="2.4" /></Icon></SquareButton>
      </Actions>
      <ChartPicker><Picker label="图表类型" value="气泡图" /></ChartPicker>
      <Cards>
        <Card aria-label="普通气泡图">
          <Icon w={37} h={28} color="none">
            <circle cx="14" cy="8" r="5" fill="#bcd3f7" stroke="#5b94e6" strokeWidth="1.4" />
            <circle cx="33" cy="4" r="3" fill="#bfe0fa" stroke="#58aef0" />
            <circle cx="26" cy="15" r="4" fill="#c8efcf" stroke="#6fd088" />
            <circle cx="6" cy="19" r="3" fill="#fde0b4" stroke="#f9bd66" />
            <path d="M1 26.500h36" stroke="#555" />
          </Icon>
        </Card>
        <Card $on aria-label="力学气泡图">
          <Icon w={40} h={30} color="none">
            {dots.map(([x, y, r, f]) => <circle key={`${x}-${y}`} cx={x} cy={y} r={r} fill={f} />)}
            <path d="M4 29.500h36" stroke="#555" />
          </Icon>
        </Card>
      </Cards>
    </Props>
  </>
);

/* ---------- page ---------- */

export default function App() {
  return (
    <>
      <GlobalStyle />
      <Window>
        <TitleBar>
          <Mark />
          <TitleText>FineReport 10.0 stable 2020-04-24 @默认[本地目录]</TitleText>
          <PathText>C:\FineReport_10.0\webapps\webroot\WEB-INF\reportlets/力学气泡图.cpt</PathText>
          <Spacer />
          <IconButton $w={46} $h={30} aria-label="最小化"><Icon w={10} h={10} color="#000"><path d="M0 5.500h10" /></Icon></IconButton>
          <IconButton $w={45} $h={30} aria-label="最大化"><Icon w={10} h={10} color="#000"><path d="M.5.5h9v9h-9z" /></Icon></IconButton>
          <IconButton $w={46} $h={30} aria-label="关闭"><Icon w={10} h={10} color="#000"><path d="m0 0 10 10M10 0 0 10" /></Icon></IconButton>
        </TitleBar>
        <MenuBar>
          <Menu>
            {["文件", "模板", "插入", "单元格(C)", "服务器", "帮助", "社区"].map((m) => (
              <MenuItem key={m}><Mixed>{m}</Mixed></MenuItem>
            ))}
          </Menu>
          <Spacer />
          <LogLine><Mixed>日志 | 警告:11:08:44 fireVcs-114-worker-1 ERROR [standard] 文件名、目录名或卷标语法不正确。</Mixed></LogLine>
          <IconButton $w={25} aria-label="搜索"><Icon w={17} h={17}><circle cx="7" cy="7" r="5.800" strokeWidth="1.5" /><path d="m11.500 11.500 4.500 4.500" strokeWidth="2.2" /></Icon></IconButton>
          <User><Mixed>Leo.Tsai</Mixed></User>
        </MenuBar>
        <Body>
          <LeftSide />
          <SideGrip>
            <Icon w={6} h={9} color="none"><path d="M6 0v9L0 4.500z" fill="#a0a0a2" /></Icon>
            <GripMark><Icon w={4} h={6} color="#a4a4a6"><path d="M.5 0v6M3.500 0v6" /></Icon></GripMark>
          </SideGrip>
          <Center />
          <Right />
        </Body>
      </Window>
    </>
  );
}
